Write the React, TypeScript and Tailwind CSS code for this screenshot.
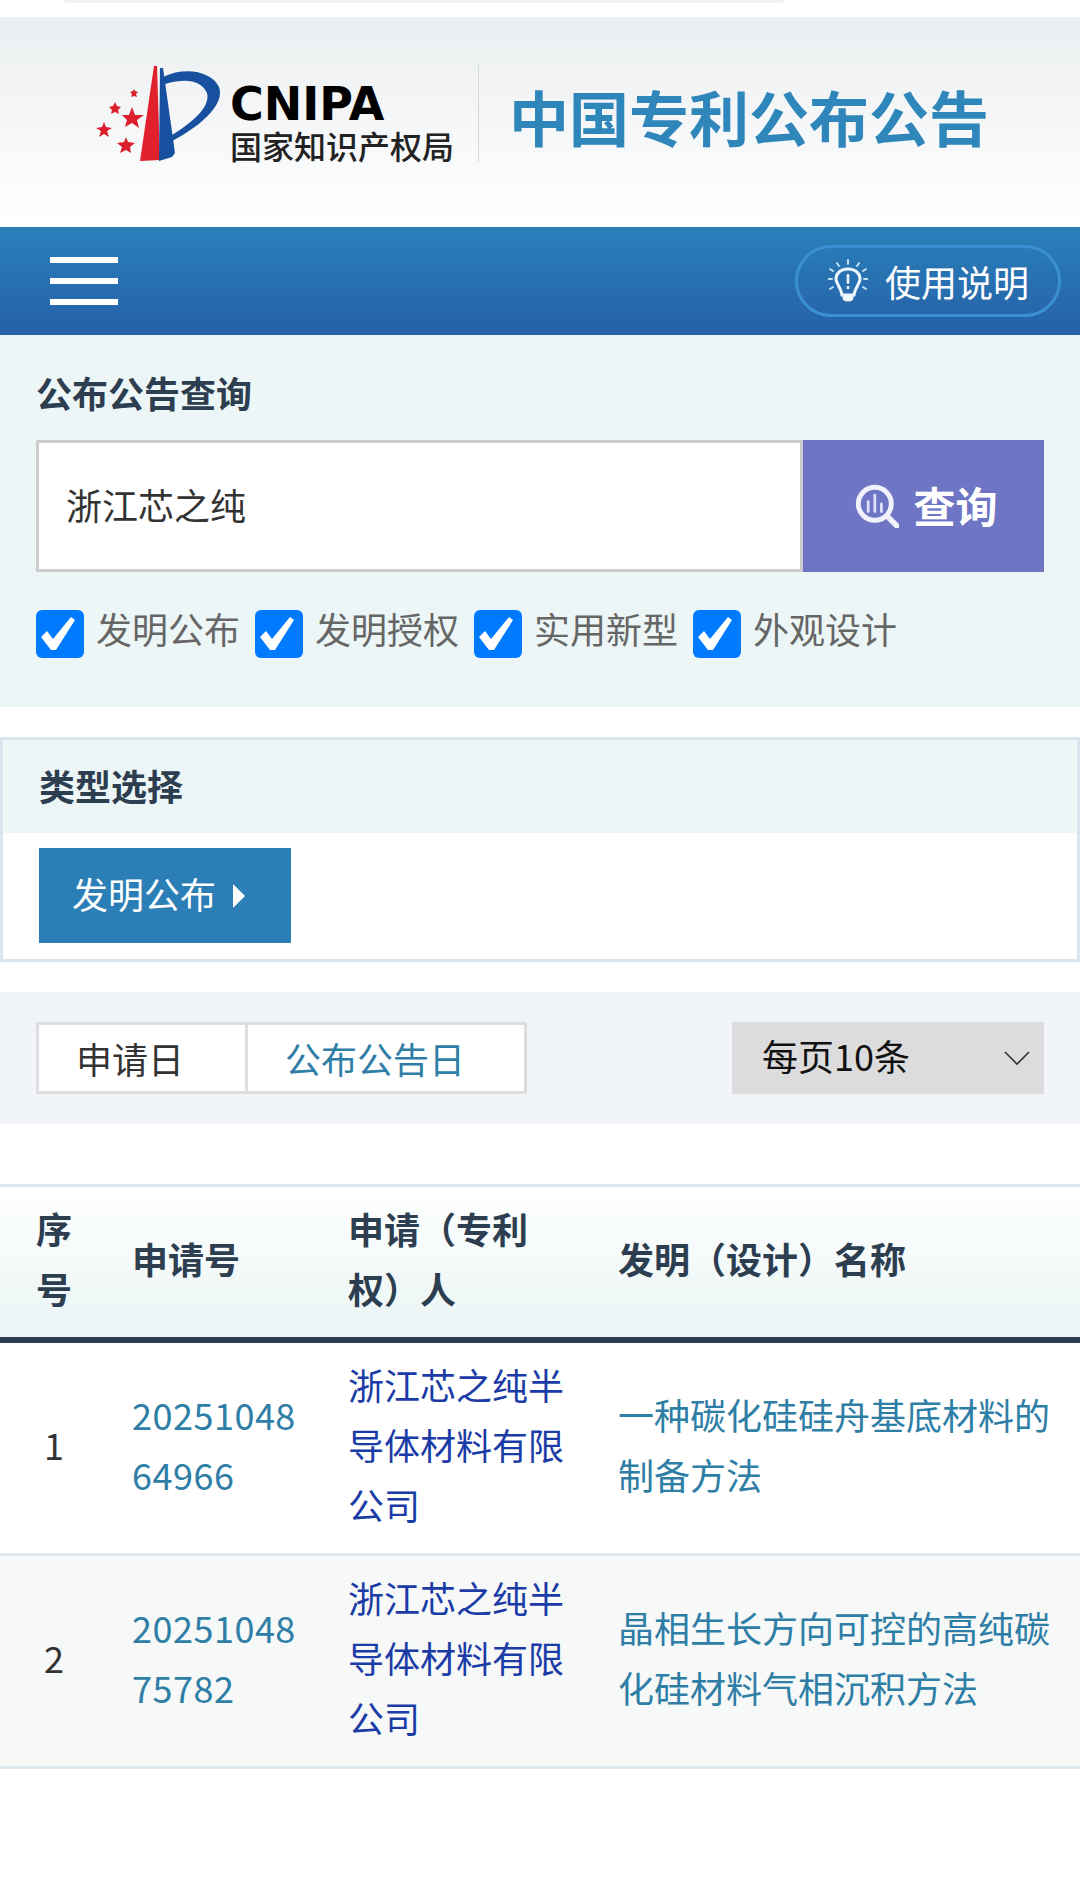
import React from "react";

const font = { fontFamily: '"Noto Sans CJK SC", "Noto Sans", sans-serif' };

function Logo() {
  return (
    <svg width="136" height="108" viewBox="92 60 136 108" className="shrink-0">
      <path d="M140 161 L154 66 L157 66 L160 160 Z" fill="#e0202c" />
      <path d="M160 68 L163 68 L175 153 L172 157 L159 161 Z" fill="#16509f" />
      <path d="M163 77 C186 66 212 72 219 87 C226 106 196 129 170 142 L169 137 C190 124 211 108 207 93 C201 80 186 78 165 84 Z" fill="#16509f" />
      <g fill="#d9202c">
        <polygon points="132,107 135,115 144,115 137,120 139,128 132,123 125,127 127,120 122,115 129,115" />
        <polygon points="115,102 117,106 121,107 118,110 119,114 115,112 111,114 112,110 109,107 113,106" />
        <polygon points="134,89 135,91 138,92 136,94 137,97 134,96 131,97 132,94 130,92 133,91" />
        <polygon points="104,122 106,127 112,128 107,131 109,137 104,134 99,137 101,131 96,128 102,127" />
        <polygon points="126,137 128,142 135,143 130,147 131,153 126,150 120,153 122,147 117,143 124,142" />
      </g>
    </svg>
  );
}

function Bulb() {
  return (
    <svg width="40" height="44" viewBox="0 0 40 44" className="shrink-0">
      <path d="M20 10 C12 10 8 15 8 20 C8 25 13 28 14 36 L26 36 C27 28 32 25 32 20 C32 15 28 10 20 10 Z" fill="none" stroke="#eef7fb" strokeWidth="3" />
      <path d="M14 35 L26 35 L25 41 Q20 44 15 41 Z" fill="#eef7fb" />
      <rect x="18.7" y="15" width="2.6" height="10" rx="1.2" fill="#eef7fb" />
      <rect x="18.7" y="27" width="2.6" height="3" fill="#eef7fb" />
      <g stroke="#bfe0ee" strokeWidth="2" strokeLinecap="round">
        <path d="M20 1 L20 5" />
        <path d="M9 4 L11 7" />
        <path d="M31 4 L29 7" />
        <path d="M2 10 L5 12" />
        <path d="M38 10 L35 12" />
        <path d="M0 20 L4 20" />
        <path d="M36 20 L40 20" />
        <path d="M2 30 L5 28" />
        <path d="M38 30 L35 28" />
      </g>
    </svg>
  );
}

function SearchIcon() {
  return (
    <svg width="44" height="44" viewBox="0 0 40 40" className="shrink-0">
      <circle cx="18" cy="18" r="15" fill="none" stroke="#f0f1fa" strokeWidth="4.5" />
      <path d="M30 30 L38 38" stroke="#f0f1fa" strokeWidth="5" strokeLinecap="round" />
      <g stroke="#dfe1f4" strokeWidth="2.5" strokeLinecap="round">
        <path d="M12 16 L12 25" />
        <path d="M18 10 L18 25" />
        <path d="M24 18 L24 25" />
      </g>
    </svg>
  );
}

function Check({ label }: { label: string }) {
  return (
    <div className="flex items-center w-[219px] shrink-0">
      <div className="w-[48px] h-[48px] rounded-[6px] bg-[#007aff] shrink-0">
        <svg width="48" height="48" viewBox="0 0 48 48">
          <path d="M5 27 L11 21 L17 29 L35 7 L39 10 L20 40 L15 40 Z" fill="#ffffff" />
        </svg>
      </div>
      <span className="ml-[12px] -mt-[12px] text-[36px] leading-[48px] text-[#666666] whitespace-nowrap">{label}</span>
    </div>
  );
}

const rows = [
  { n: "1", no: "2025104864966", who: "浙江芯之纯半导体材料有限公司", name: "一种碳化硅硅舟基底材料的制备方法", bg: "bg-white" },
  { n: "2", no: "2025104875782", who: "浙江芯之纯半导体材料有限公司", name: "晶相生长方向可控的高纯碳化硅材料气相沉积方法", bg: "bg-[#f7f8f8]" },
];

export default function App() {
  return (
    <div className="w-[1080px] min-h-[1900px] bg-white" style={font}>
      <div className="ml-[64px] w-[720px] h-[3px] bg-[#f1f1f1] rounded-b-[3px]" />
      <header className="mt-[14px] h-[210px] bg-gradient-to-b from-[#ebeef0] to-white flex items-start pl-[92px] pt-[43px]">
        <Logo />
        <div className="ml-[2px] mt-[23px] w-[226px] shrink-0">
          <div className="text-[46px] leading-[42px] font-bold text-black" style={{ fontFamily: '"DejaVu Sans", sans-serif' }}>CNIPA</div>
          <div className="text-[32px] leading-[40px] font-medium text-[#222222] whitespace-nowrap">国家知识产权局</div>
        </div>
        <div className="ml-[22px] mt-[5px] w-[1px] h-[97px] bg-[#d5d8da]" />
        <div className="ml-[30px] mt-[21px] text-[60px] leading-[70px] font-bold text-[#2e86ba] whitespace-nowrap">中国专利公布公告</div>
      </header>

      <nav className="h-[108px] bg-gradient-to-b from-[#2b80ba] to-[#2561a8] flex items-center justify-between pl-[50px] pr-[19px]">
        <div className="flex flex-col gap-[15px] w-[68px]">
          <div className="h-[6px] bg-white" />
          <div className="h-[6px] bg-white" />
          <div className="h-[6px] bg-white" />
        </div>
        <div className="w-[266px] h-[72px] rounded-[36px] border-[3px] border-[#3a90d2] flex items-center pl-[30px] gap-[17px]">
          <Bulb />
          <span className="text-[36px] leading-[44px] text-white whitespace-nowrap">使用说明</span>
        </div>
      </nav>

      <section className="h-[372px] bg-[#ecf6f6] pt-[33px] px-[36px]">
        <h2 className="text-[36px] leading-[48px] font-bold text-[#2c3e50]">公布公告查询</h2>
        <div className="mt-[24px] flex h-[132px]">
          <div className="w-[767px] border-[3px] border-[#cccccc] bg-white flex items-center pl-[27px] pb-[5px] text-[36px] text-[#333333]">浙江芯之纯</div>
          <div className="w-[241px] bg-[#6e75c4] flex items-center justify-center gap-[14px] pl-[6px]">
            <SearchIcon />
            <span className="text-[42px] leading-[48px] font-bold text-white -mt-[2px]">查询</span>
          </div>
        </div>
        <div className="mt-[38px] flex">
          <Check label="发明公布" />
          <Check label="发明授权" />
          <Check label="实用新型" />
          <Check label="外观设计" />
        </div>
      </section>

      <section className="mt-[30px] h-[225px] border-[3px] border-[#d8e6ee]">
        <div className="h-[93px] bg-[#ecf6f6] flex items-center pl-[36px] pb-[4px]">
          <h2 className="text-[36px] leading-[48px] font-bold text-[#2c3e50]">类型选择</h2>
        </div>
        <div className="pt-[15px] pl-[36px]">
          <div className="w-[252px] h-[95px] bg-[#2b7eb6] flex items-center pl-[33px]">
            <span className="text-[36px] leading-[48px] text-white -mt-[6px]">发明公布</span>
            <span className="ml-[17px] w-0 h-0 border-y-[12px] border-y-transparent border-l-[12px] border-l-white" />
          </div>
        </div>
      </section>

      <section className="mt-[30px] h-[132px] bg-[#f1f5f9] px-[36px] flex items-center justify-between">
        <div className="flex h-[72px] w-[491px] border-[3px] border-[#dddddd] bg-white text-[36px]">
          <div className="w-[209px] border-r-[3px] border-[#dddddd] flex items-center pl-[37px] text-[#333333]">申请日</div>
          <div className="flex-1 flex items-center pl-[37px] text-[#2e7ea6]">公布公告日</div>
        </div>
        <div className="w-[312px] h-[72px] bg-[#dcdcdc] flex items-center justify-between pl-[30px] pr-[14px]">
          <span className="text-[36px] leading-[44px] text-[#111111] -mt-[6px]">每页10条</span>
          <svg width="26" height="16" viewBox="0 0 26 16">
            <path d="M1 2 L13 14 L25 2" fill="none" stroke="#333333" strokeWidth="1.6" />
          </svg>
        </div>
      </section>

      <table className="mt-[60px] w-[1080px] table-fixed border-separate border-spacing-0 text-[36px] leading-[60px]">
        <colgroup>
          <col className="w-[132px]" />
          <col className="w-[216px]" />
          <col className="w-[270px]" />
          <col className="w-[462px]" />
        </colgroup>
        <thead>
          <tr className="bg-gradient-to-b from-white to-[#e9f4f4] text-[#2c3e50] font-bold text-left align-middle">
            <th className="pl-[36px] pr-[56px] pt-[11px] pb-[19px] border-t-[3px] border-b-[6px] border-[#d8e6ee] border-b-[#2c3e50]">序号</th>
            <th className="pr-[30px] pt-[11px] pb-[19px] border-t-[3px] border-b-[6px] border-[#d8e6ee] border-b-[#2c3e50]">申请号</th>
            <th className="pr-[50px] pt-[11px] pb-[19px] border-t-[3px] border-b-[6px] border-[#d8e6ee] border-b-[#2c3e50]">申请（专利权）人</th>
            <th className="pr-[20px] pt-[11px] pb-[19px] border-t-[3px] border-b-[6px] border-[#d8e6ee] border-b-[#2c3e50]">发明（设计）名称</th>
          </tr>
        </thead>
        <tbody>
          {rows.map((r) => (
            <tr key={r.n} className={`${r.bg} align-middle`}>
              <td className="pl-[44px] pt-[11px] pb-[19px] border-b-[3px] border-[#dde8ee] text-[#333333]">{r.n}</td>
              <td className="pr-[42px] pt-[11px] pb-[19px] border-b-[3px] border-[#dde8ee] text-[#2e7ea6] break-all tracking-[0.5px]">{r.no}</td>
              <td className="pr-[50px] pt-[11px] pb-[19px] border-b-[3px] border-[#dde8ee] text-[#1b3ca6]">{r.who}</td>
              <td className="pr-[20px] pt-[11px] pb-[19px] border-b-[3px] border-[#dde8ee] text-[#2e7ea6]">{r.name}</td>
            </tr>
          ))}
        </tbody>
      </table>
    </div>
  );
}
